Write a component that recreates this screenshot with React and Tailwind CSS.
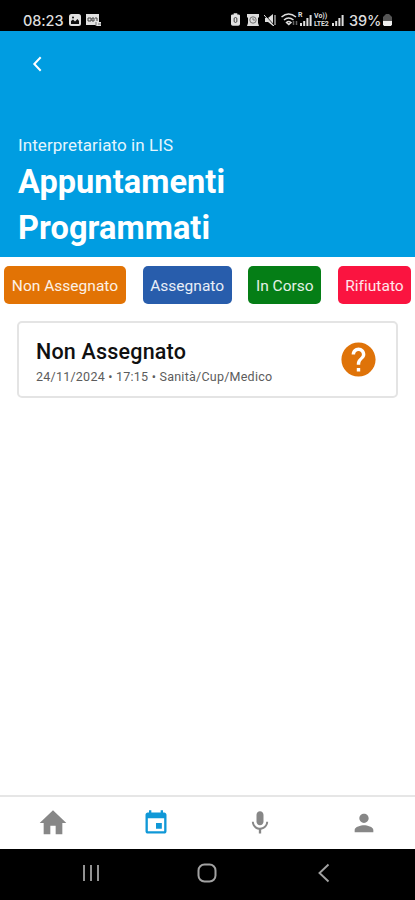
import React from "react";

function Material({ d, className }) {
  return (
    <svg viewBox="0 0 24 24" fill="currentColor" preserveAspectRatio="none" className={`block shrink-0 ${className}`}>
      <path d={d} />
    </svg>
  );
}

function SignalBars({ className }) {
  return (
    <svg viewBox="0 0 12 12" fill="currentColor" className={`block shrink-0 ${className}`}>
      <path d="M0 9h2v3H0zM3.2 7h2v5h-2zM6.4 4h2v8h-2zM9.6 1h2v11h-2z" />
    </svg>
  );
}

function StatusBar() {
  return (
    <div className="flex h-[31px] shrink-0 items-start bg-black pt-[13px] pl-[23px] text-[#dedede]">
      <span className="w-[46px] font-['Inter',sans-serif] text-[14.5px] leading-[15px] font-medium tracking-[-0.1px]">08:23</span>
      <svg viewBox="0 0 12 12" className="mt-[1px] block size-[12px]">
        <rect width="12" height="12" rx="2.5" fill="#e2e2e2" />
        <path d="M2 10V7l2-1.5 2 2 2.500-2.500L10 7v3z" fill="#111" />
        <circle cx="4" cy="3.500" r="1" fill="#111" />
      </svg>
      <svg viewBox="0 0 16 13" className="mt-[1px] ml-[5px] block h-[13px] w-[16px]">
        <path d="M0 0h13v8h2v4h-5v-1H0z" fill="#e2e2e2" />
        <path d="M2 4h3v3H2zM6 4h2v3H6zM9 4h2v3" fill="none" stroke="#444" />
        <path d="M10 8v4M12 10h3" stroke="#777" fill="none" />
      </svg>
      <svg viewBox="0 0 10 14" className="ml-[129px] block h-[13px] w-[9px]">
        <path d="M3 0h4v1.500h1A1.800 1.800 0 0 1 10 3.500V12a2 2 0 0 1-2 2H2a2 2 0 0 1-2-2V3.500a1.800 1.800 0 0 1 2-2h1z" fill="#e2e2e2" />
        <path d="M3.500 5.500q1.500-1.500 3 0v4q-1.500 1.500-3 0z" stroke="#333" fill="none" />
      </svg>
      <svg viewBox="0 0 12 12" className="mt-[1px] ml-[7px] block size-[12px]">
        <path d="M0 0h12v3l-1 1v5l1 3H0l1-3V4L0 3z" fill="#dcdcdc" />
        <circle cx="6" cy="6" r="3.200" fill="none" stroke="#555" strokeWidth=".8" />
        <path d="M6 4v2h2" stroke="#777" fill="none" />
      </svg>
      <svg viewBox="0 0 12 12" className="mt-[1px] ml-[5px] block size-[12px]">
        <path d="M1 4h3l5-4v12L4 8H1z" fill="#dedede" />
        <path d="M0 0l10 11" stroke="#000" strokeWidth="1" />
        <path d="M0 1l10 11" stroke="#dedede" strokeWidth="1" />
        <path d="M11 1v10" stroke="#bbb" strokeWidth="1.300" />
      </svg>
      <svg viewBox="0 0 17 13" className="ml-[5px] block h-[13px] w-[17px]" fill="none" stroke="#ddd" strokeWidth="1.500">
        <path d="M.5 4Q7.500-2 15 4M3 7q4.500-4 9.500 0M5.500 9.500q2-2 4.500 0l-2.200 2z" />
        <path d="M12.500 8v4M15.500 8v4" stroke="#666" />
      </svg>
      <div className="relative ml-[1px] h-[13px] w-[13px]">
        <SignalBars className="mt-[1px] ml-[1px] size-[12px]" />
        <span className="absolute -top-px -left-[1px] bg-black font-['Roboto',sans-serif] text-[7px] leading-[7px] font-bold">R</span>
      </div>
      <div className="-mt-[1px] ml-[2px] w-[16px] font-['Roboto',sans-serif] text-[7px] leading-[8px] font-bold whitespace-nowrap">
        <div>Vo))</div>
        <div className="tracking-[-0.2px]">LTE2</div>
      </div>
      <SignalBars className="mt-[1px] ml-[2px] size-[12px]" />
      <span className="ml-[5px] w-[33px] font-['Inter',sans-serif] text-[14.5px] leading-[15px] font-medium tracking-[-0.1px]">39%</span>
      <svg viewBox="0 0 9 12" className="mt-[1px] ml-[1px] block h-[12px] w-[9px]">
        <path d="M0 7V3l2-2 1-1h3l1 1 2 2v4z" fill="#555" />
        <path d="M0 7h9v3.500L8 12H1l-1-1.500z" fill="#eee" />
      </svg>
    </div>
  );
}

function Header() {
  return (
    <header className="h-[226px] shrink-0 bg-[#009de1] pl-[18px] text-white">
      <svg viewBox="0 0 10 16" fill="none" stroke="currentColor" strokeWidth="2" className="mt-[25px] ml-[14px] block h-[16px] w-[10px]">
        <path d="M8.700 1.300L2.300 8l6.400 6.700" />
      </svg>
      <p className="mt-[63px] text-[17px] leading-[20px] tracking-[0.08px] text-[#e4f5fd]">Interpretariato in LIS</p>
      <h1 className="mt-[4px] text-[32.5px] leading-[46px] font-bold tracking-[0.07px]">
        Appuntamenti
        <br />
        Programmati
      </h1>
    </header>
  );
}

const filters = [
  { label: "Non Assegnato", style: "w-[122px] bg-[#e27305]" },
  { label: "Assegnato", style: "w-[89px] bg-[#285dac]" },
  { label: "In Corso", style: "w-[73px] bg-[#057e16]" },
  { label: "Rifiutato", style: "w-[73px] bg-[#fa1440]" },
];

function Filters() {
  return (
    <div className="flex shrink-0 justify-between pt-[9px] pr-[4px] pl-[4px]">
      {filters.map((f) => (
        <button key={f.label} className={`h-[38px] rounded-[5px] pt-[4px] text-center text-[15.5px] tracking-[0.02px] whitespace-nowrap text-white/90 ${f.style}`}>
          {f.label}
        </button>
      ))}
    </div>
  );
}

function AppointmentCard() {
  return (
    <article className="mx-[17px] mt-[17px] flex h-[77px] shrink-0 items-center justify-between rounded-[5px] border-2 border-[#e4e4e4] pr-[17px] pl-[17px]">
      <div className="pt-[7px]">
        <h2 className="text-[21.5px] leading-[24px] font-medium tracking-[0.2px] text-[#101010]">Non Assegnato</h2>
        <p className="mt-[4px] text-[12.5px] leading-[18px] tracking-[0.24px] whitespace-nowrap text-[#5c5c5c]">24/11/2024 • 17:15 • Sanità/Cup/Medico</p>
      </div>
      <Material
        className="size-[41px] text-[#df7309]"
        d="M12 2C6.480 2 2 6.480 2 12s4.480 10 10 10 10-4.480 10-10S17.520 2 12 2zm1 17h-2v-2h2v2zm2.070-7.750l-.9.920C13.450 12.900 13 13.500 13 15h-2v-.5c0-1.100.450-2.100 1.170-2.830l1.240-1.260c.370-.360.590-.860.590-1.410 0-1.100-.9-2-2-2s-2 .9-2 2H8c0-2.210 1.790-4 4-4s4 1.790 4 4c0 .880-.360 1.680-.930 2.250z"
      />
    </article>
  );
}

function TabBar() {
  return (
    <nav className="grid h-[54px] shrink-0 grid-cols-4 items-center justify-items-center border-t-2 border-[#e6e6e6] bg-white pb-[1px] pl-[1px] text-[#878787]">
      <Material className="h-[34px] w-[32px]" d="M10 20v-6h4v6h5v-8h3L12 3 2 12h3v8z" />
      <Material
        className="size-[28px] text-[#1098d7]"
        d="M17 12h-5v5h5v-5zM16 1v2H8V1H6v2H5c-1.110 0-1.990.9-1.990 2L3 19c0 1.100.890 2 2 2h14c1.100 0 2-.9 2-2V5c0-1.100-.9-2-2-2h-1V1h-2zm3 18H5V8h14v11z"
      />
      <Material
        className="size-[28px]"
        d="M12 14c1.660 0 2.990-1.340 2.990-3L15 5c0-1.660-1.340-3-3-3S9 3.340 9 5v6c0 1.660 1.340 3 3 3zm5.300-3c0 3-2.540 5.100-5.300 5.100S6.700 14 6.700 11H5c0 3.410 2.720 6.230 6 6.720V21h2v-3.280c3.280-.480 6-3.300 6-6.720h-1.700z"
      />
      <Material
        className="ml-[2px] size-[28px]"
        d="M12 12c2.210 0 4-1.790 4-4s-1.790-4-4-4-4 1.790-4 4 1.790 4 4 4zm0 2c-2.670 0-8 1.340-8 4v2h16v-2c0-2.660-5.330-4-8-4z"
      />
    </nav>
  );
}

function SystemNav() {
  return (
    <div className="flex h-[51px] shrink-0 items-center bg-black pb-[3px] pl-[82px] text-[#a2a2a2]">
      <svg viewBox="0 0 18 18" fill="none" stroke="currentColor" strokeWidth="1.800" className="block size-[18px]">
        <path d="M2 1v16M9 1v16M16 1v16" />
      </svg>
      <svg viewBox="0 0 20 20" fill="none" stroke="currentColor" strokeWidth="2" className="ml-[97px] block size-[20px]">
        <rect x="1.500" y="1.500" width="17" height="17" rx="6" />
      </svg>
      <svg viewBox="0 0 12 20" fill="none" stroke="currentColor" strokeWidth="1.900" className="ml-[101px] block h-[20px] w-[12px]">
        <path d="M10.500 1.500L1.500 10l9 8.500" />
      </svg>
    </div>
  );
}

export default function App() {
  return (
    <div className="flex h-[900px] w-[415px] flex-col overflow-hidden bg-white font-['Roboto',sans-serif]">
      <StatusBar />
      <Header />
      <Filters />
      <AppointmentCard />
      <div className="flex-1" />
      <TabBar />
      <SystemNav />
    </div>
  );
}
